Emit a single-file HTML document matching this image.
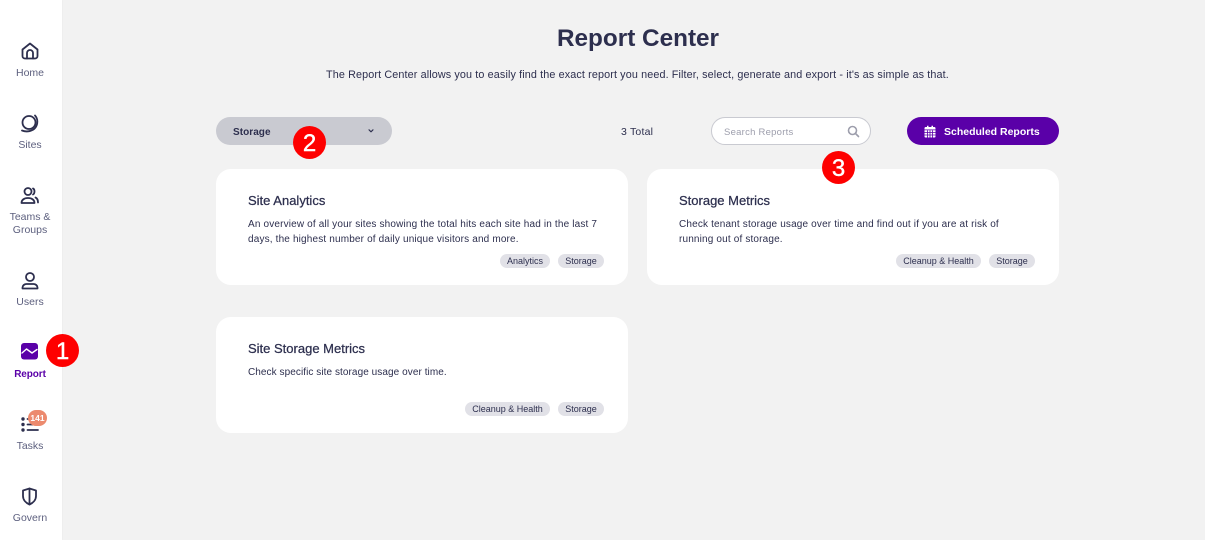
<!DOCTYPE html>
<html><head><meta charset="utf-8"><style>
html,body{margin:0;padding:0;width:1205px;height:540px;overflow:hidden;background:#f2f2f2;font-family:"Liberation Sans",sans-serif}
.a{position:absolute;white-space:nowrap}
#side{position:absolute;left:0;top:0;width:62px;height:540px;background:#fff;box-shadow:1px 0 1px rgba(0,0,0,.025)}
.nl{position:absolute;left:0;width:60px;margin-top:1px;text-align:center;font-size:10.5px;line-height:13px;color:#5c5f7e}
.card{position:absolute;width:412px;height:116px;background:#fff;border-radius:15px}
.t{position:absolute;left:32px;top:24px;font-size:13px;line-height:16px;color:#2d2f4e;white-space:nowrap;-webkit-text-stroke:.25px #2d2f4e}
.d{position:absolute;left:32px;top:48px;font-size:10px;line-height:15px;color:#2d2f4e;white-space:nowrap;letter-spacing:.16px}
.tag{position:absolute;top:85px;height:14px;line-height:15px;border-radius:7px;background:#e1e1e7;font-size:9px;color:#2d2f4e;text-align:center}
.num{position:absolute;width:33px;height:33px;border-radius:50%;background:#fe0000;color:#fff;font-size:24px;line-height:35px;text-align:center;-webkit-text-stroke:.4px #fff}
svg{position:absolute;fill:none;stroke:#2d2f4e;stroke-width:1.8;stroke-linecap:round;stroke-linejoin:round}
</style></head><body>
<div id="side"></div>
<svg style="left:21px;top:42px" width="18" height="18" viewBox="0 0 18 18"><path d="M1.500 7.500 9 1.500l7.500 6V14a2.500 2.500 0 0 1-2.500 2.500H4A2.500 2.500 0 0 1 1.500 14z"/><path d="M6 16.500V11a3 3 0 0 1 6 0v5.500"/></svg>
<div class="nl" style="top:66px">Home</div>
<svg style="left:20px;top:114px" width="19" height="19" viewBox="0 0 19 19"><circle cx="9" cy="8.500" r="6.500"/><path d="M15 1.500c3 3 3 8.500.5 12-2.500 3.500-8.500 5-13.500 3"/></svg>
<div class="nl" style="top:138px">Sites</div>
<svg style="left:20px;top:186px" width="19" height="19" viewBox="0 0 19 19"><circle cx="8" cy="5.500" r="3.500"/><path d="M1.500 17c0-3 2.500-5 6.500-5s6.500 2 6.500 5z"/><path d="M13 2.500c2 .8 2 5 0 6M15.500 11.500c1.500.7 2.500 2.500 2.500 5"/></svg>
<div class="nl" style="top:210px">Teams &amp;<br>Groups</div>
<svg style="left:21px;top:271px" width="18" height="19" viewBox="0 0 18 19"><circle cx="9" cy="6" r="4"/><path d="M1.500 17.500v-1c0-2 2-3.500 4-3.500h7c2 0 4 1.500 4 3.500v1z"/></svg>
<div class="nl" style="top:295px">Users</div>
<svg style="left:21px;top:343px" width="17" height="17" viewBox="0 0 17 17"><rect x="0" y="0" width="17" height="16.500" rx="3" fill="#5a00a8" stroke="none"/><path d="M1 10 5.500 6 11 10l5-3.500" stroke="#fff" stroke-width="1.400"/></svg>
<div class="nl" style="top:367px;color:#5a00a8;font-weight:bold;font-size:10px;letter-spacing:-.1px">Report</div>
<svg style="left:21px;top:416px" width="18" height="16" viewBox="0 0 18 16"><path d="M6.500 3H17M6.500 8.500H17M6.500 14H17"/><circle cx="2" cy="3" r="1.700" fill="#2d2f4e" stroke="none"/><circle cx="2" cy="8.500" r="1.700" fill="#2d2f4e" stroke="none"/><circle cx="2" cy="14" r="1.700" fill="#2d2f4e" stroke="none"/></svg>
<div class="a" style="left:28px;top:410px;width:19px;height:16px;border-radius:8px;background:#ec8a6e;color:#fff;font-size:8.500px;font-weight:bold;line-height:16px;text-align:center">141</div>
<div class="nl" style="top:439px">Tasks</div>
<svg style="left:21px;top:487px" width="17" height="19" viewBox="0 0 17 19"><path d="M8.500 1.500 15 3.500V9c0 4-3 7-6.500 8.500C5 16 2 13 2 9V3.500z"/><path d="M8.500 1.500v16"/></svg>
<div class="nl" style="top:511px">Govern</div>
<div class="num" style="left:46px;top:334px">1</div>

<div class="a" style="left:338px;top:24px;width:600px;text-align:center;font-size:24.300px;line-height:30px;font-weight:bold;color:#2d2f4e">Report Center</div>
<div class="a" style="left:326px;top:68px;font-size:10.800px;line-height:14px;color:#2d2f4e;letter-spacing:.12px">The Report Center allows you to easily find the exact report you need. Filter, select, generate and export - it's as simple as that.</div>

<div class="a" style="left:216px;top:117px;width:176px;height:28px;border-radius:14px;background:#c9cad1"></div>
<div class="a" style="left:233px;top:126px;font-size:10px;line-height:13px;color:#2d2f4e;font-weight:bold;letter-spacing:.05px">Storage</div>
<svg style="left:367px;top:128px;stroke-width:1.100" width="8" height="6" viewBox="0 0 8 6"><path d="M2 1.800 4 3.800l2-2"/></svg>
<div class="num" style="left:293px;top:126px">2</div>
<div class="a" style="left:621px;top:125px;font-size:10.500px;line-height:14px;color:#2d2f4e;letter-spacing:.2px">3 Total</div>
<div class="a" style="left:711px;top:117px;width:158px;height:26px;border:1px solid #c9cad1;border-radius:14px;background:#fff"></div>
<div class="a" style="left:724px;top:126px;font-size:9.500px;line-height:13px;color:#9d9eac;letter-spacing:.25px">Search Reports</div>
<svg style="left:847px;top:125px;stroke:#9d9eac;stroke-width:1.600" width="13" height="13" viewBox="0 0 13 13"><circle cx="5.500" cy="5.500" r="4"/><path d="m8.500 8.500 3 3"/></svg>
<div class="a" style="left:907px;top:117px;width:152px;height:28px;border-radius:14px;background:#5a00a8"></div>
<svg style="left:924px;top:125px;stroke:none" width="12" height="13" viewBox="0 0 12 13"><path fill="#fff" d="M1.500 2H3V.8h1.500V2h3V.8H9V2h1.500A1.200 1.200 0 0 1 11.500 3.200V4.500H.5V3.200A1.200 1.200 0 0 1 1.500 2zM.5 5.300h11v6.200A1 1 0 0 1 10.500 12.500h-9a1 1 0 0 1-1-1z"/><path stroke="#5a00a8" stroke-width=".8" d="M.5 7.500h11M.5 10h11M3.500 5.500v7M6 5.500v7M8.500 5.500v7"/></svg>
<div class="a" style="left:944px;top:125px;font-size:10.500px;line-height:14px;font-weight:bold;color:#fff">Scheduled Reports</div>

<div class="card" style="left:216px;top:169px">
<div class="t">Site Analytics</div>
<div class="d">An overview of all your sites showing the total hits each site had in the last 7<br>days, the highest number of daily unique visitors and more.</div>
<div class="tag" style="left:284px;width:50px">Analytics</div>
<div class="tag" style="left:342px;width:46px">Storage</div>
</div>
<div class="card" style="left:647px;top:169px">
<div class="t">Storage Metrics</div>
<div class="d">Check tenant storage usage over time and find out if you are at risk of<br>running out of storage.</div>
<div class="tag" style="left:249px;width:85px">Cleanup &amp; Health</div>
<div class="tag" style="left:342px;width:46px">Storage</div>
</div>
<div class="card" style="left:216px;top:317px">
<div class="t">Site Storage Metrics</div>
<div class="d" style="letter-spacing:.07px">Check specific site storage usage over time.</div>
<div class="tag" style="left:249px;width:85px">Cleanup &amp; Health</div>
<div class="tag" style="left:342px;width:46px">Storage</div>
</div>
<div class="num" style="left:822px;top:151px">3</div>
</body></html>
